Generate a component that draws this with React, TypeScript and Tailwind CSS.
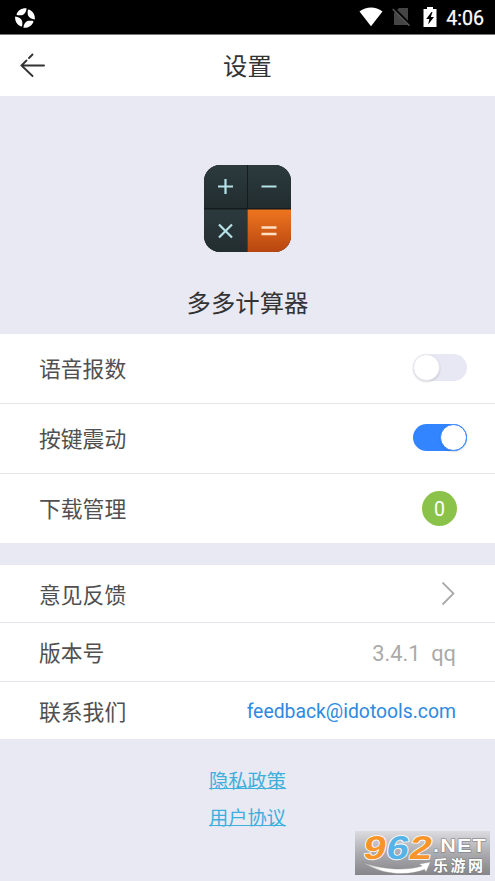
import type { ReactNode } from 'react'

const LINKS = ['隐私政策', '用户协议']

function StatusBar() {
  return (
    <div className="flex h-[35px] shrink-0 items-center border-b border-[#777] bg-black pl-[15px] pr-[11px] text-white">
      <svg width="20" height="20" viewBox="0 0 20 20" fill="#fff" className="mt-px">
        {[0, 90, 180, 270].map((angle) => (
          <path
            key={angle}
            d="M1.6 6C3.4 1.8 7.3-0.3 11.6 0.2C11.4 3.2 9.8 6 7.6 6.9C6.2 7.5 4 7.4 2.4 7.2C1.7 7 1.5 6.5 1.6 6Z"
            transform={`rotate(${angle} 10 10)`}
          />
        ))}
      </svg>
      <svg width="24" height="20" viewBox="0 0 24 20" className="ml-auto">
        <path d="M0.5 4.5C7.5-1 16.5-1 23.5 4.5L12 19.2Z" fill="#fff" />
      </svg>
      <svg width="19" height="20" viewBox="0 0 19 20" className="ml-[9px]">
        <path d="M7 1H16V18H2V6Z" fill="#454545" />
        <path d="M2 1.2 19 18.2" stroke="#000" strokeWidth="2" />
        <path d="M0.7 2 17.5 18.8" stroke="#555" strokeWidth="1.6" />
      </svg>
      <svg width="14" height="20" viewBox="0 0 14 20" className="ml-[12px]">
        <path d="M4 0H10V2H13.5V20H0.5V2H4Z" fill="#fff" />
        <path d="M8.5 5 3.2 12H6.3L5.2 17.5 11 10H7.8L9.5 5Z" fill="#000" />
      </svg>
      <span className="ml-[9px] mt-[3px] text-[19.6px] leading-none [-webkit-text-stroke:0.25px_white]">4:06</span>
    </div>
  )
}

function AppIcon() {
  return (
    <svg width="87" height="87" viewBox="0 0 87 87">
      <defs>
        <clipPath id="tile">
          <rect width="87" height="87" rx="16" />
        </clipPath>
        <linearGradient id="dark" x2="0" y2="1">
          <stop stopColor="#2c3a3e" />
          <stop offset="1" stopColor="#222d2f" />
        </linearGradient>
        <linearGradient id="orange" x2="0" y2="1">
          <stop stopColor="#ee751f" />
          <stop offset="1" stopColor="#b74510" />
        </linearGradient>
      </defs>
      <g clipPath="url(#tile)">
        <rect width="87" height="87" fill="#141c1e" />
        <rect width="43" height="43" fill="url(#dark)" />
        <rect x="44" width="43" height="43" fill="url(#dark)" />
        <rect y="44.5" width="43" height="43" fill="url(#dark)" />
        <rect x="43.5" y="44.5" width="43.5" height="43" fill="url(#orange)" />
      </g>
      <path d="M14 21.5H29M21.5 14V29M57.5 21.5H72.5M15 59.5 28 72.5M28 59.5 15 72.5" stroke="#b5e2e6" strokeWidth="2.2" />
      <path d="M57.5 62.5H72.5M57.5 69H72.5" stroke="#ffe0c4" strokeWidth="2.3" />
    </svg>
  )
}

function Toggle({ on = false }: { on?: boolean }) {
  return (
    <div
      className={`mb-[3px] flex h-[27px] w-[54px] items-center rounded-full ${
        on ? 'mr-[28px] justify-end bg-[#3385ff]' : 'mr-[28px] bg-[#e8e8f4]'
      }`}
    >
      <div
        className={`size-[27px] rounded-full border bg-white shadow-[0_1px_2px_rgba(0,0,0,0.15)] ${
          on ? 'border-[#3385ff]' : 'border-[#e6e6ee]'
        }`}
      />
    </div>
  )
}

function Row({ label, className, children }: { label: string; className: string; children: ReactNode }) {
  return (
    <div className={`flex items-center justify-between bg-white pl-[39px] ${className}`}>
      <span className="pt-[3px] text-[21.8px] leading-none text-[#505050]">{label}</span>
      {children}
    </div>
  )
}

function Watermark() {
  return (
    <svg
      width="135"
      height="44"
      viewBox="0 0 135 44"
      className="absolute bottom-[6px] right-[5px] overflow-visible"
    >
      <defs>
        <linearGradient id="plate" x2="0" y2="1">
          <stop stopColor="#dcdce0" />
          <stop offset="0.5" stopColor="#acacb0" />
          <stop offset="1" stopColor="#85858a" />
        </linearGradient>
        <linearGradient id="swoosh" x2="1" y2="0">
          <stop stopColor="#bbb" />
          <stop offset="0.3" stopColor="#fff" />
        </linearGradient>
      </defs>
      <rect width="135" height="44" fill="url(#plate)" />
      <g
        fontFamily="Liberation Sans"
        fontWeight="bold"
        fontSize="33"
        stroke="#fff"
        strokeWidth="1.6"
        strokeLinejoin="round"
        paintOrder="stroke"
        transform="matrix(1.22 0 -0.18 1 12 0)"
      >
        <text x="0" y="27.5" fill="#f7942a">9</text>
        <text x="18.8" y="27.5" fill="#55b3e8">6</text>
        <text x="37.6" y="27.5" fill="#f7942a">2</text>
      </g>
      <path d="M7 31C27 39 52 40 67 35L64 33 75.5 31 71 41 69.5 38.5C50 46 25 43 7 31Z" fill="url(#swoosh)" stroke="#888" strokeWidth="0.4" />
      <g fill="#fff" stroke="#77777b" strokeWidth="1" paintOrder="stroke" fontWeight="bold">
        <text x="65" y="21.5" fontFamily="Liberation Sans" fontSize="18" letterSpacing="1" transform="scale(1.2 1)">.NET</text>
        <text x="78" y="39.5" fontFamily="Noto Sans CJK SC" fontSize="15" textLength="50">乐游网</text>
      </g>
    </svg>
  )
}

export default function App() {
  return (
    <div className="relative flex h-[881px] w-[495px] flex-col overflow-hidden bg-[#e9e9f4] font-[Roboto,'Noto_Sans_CJK_SC',sans-serif]">
      <StatusBar />

      {/* Title bar */}
      <header className="grid h-[61px] shrink-0 grid-cols-[1fr_auto_1fr] items-center bg-white px-[20px]">
        <svg width="26" height="26" viewBox="0 0 26 26" fill="none" stroke="#333" strokeWidth="1.9" strokeLinecap="round">
          <path d="M1.5 12.5H24M12.5 23 1.5 12.5 6.5 7.5M9 5 12.5 1.5" />
        </svg>
        <h1 className="pt-[4px] text-[24.4px] leading-none text-[#333]">设置</h1>
      </header>

      {/* App identity */}
      <section className="flex h-[238px] shrink-0 flex-col items-center pt-[69px]">
        <AppIcon />
        <p className="mt-[40px] text-[24.4px] leading-none text-[#333]">多多计算器</p>
      </section>

      <section>
        <Row label="语音报数" className="h-[70px] border-b border-[#e6e6e6]">
          <Toggle />
        </Row>
        <Row label="按键震动" className="h-[70px] border-b border-[#e6e6e6]">
          <Toggle on />
        </Row>
        <Row label="下载管理" className="h-[69px]">
          <span className="mr-[38px] flex size-[35px] items-center justify-center rounded-full bg-[#8bc34a] pt-[2px] text-[19.5px] leading-none text-white">
            0
          </span>
        </Row>
      </section>

      <section className="mt-[22px]">
        <Row label="意见反馈" className="h-[58px] border-b border-[#e4e7ec] pt-px">
          <svg width="14" height="24" viewBox="0 0 14 24" fill="none" stroke="#aaa" strokeWidth="1.8" className="mr-[40px]">
            <path d="M1.5 0.5 12.5 11.5 1.5 22.5" />
          </svg>
        </Row>
        <Row label="版本号" className="h-[59px] border-b border-[#e4e7ec]">
          <span className="mr-[39px] whitespace-pre pt-[3px] text-[21.8px] leading-none text-[#aaa]">3.4.1  qq</span>
        </Row>
        <Row label="联系我们" className="h-[57px] pt-px">
          <span className="mr-[39px] pt-px text-[19.35px] leading-none text-[#2e8ae0]">feedback@idotools.com</span>
        </Row>
      </section>

      <footer className="flex flex-col items-center gap-[17px] pt-[30px]">
        {LINKS.map((link) => (
          <a key={link} className="h-[20px] border-b border-[#3db0dc] text-[19.3px] leading-[25px] text-[#3db0dc]">
            {link}
          </a>
        ))}
      </footer>

      <Watermark />
    </div>
  )
}
